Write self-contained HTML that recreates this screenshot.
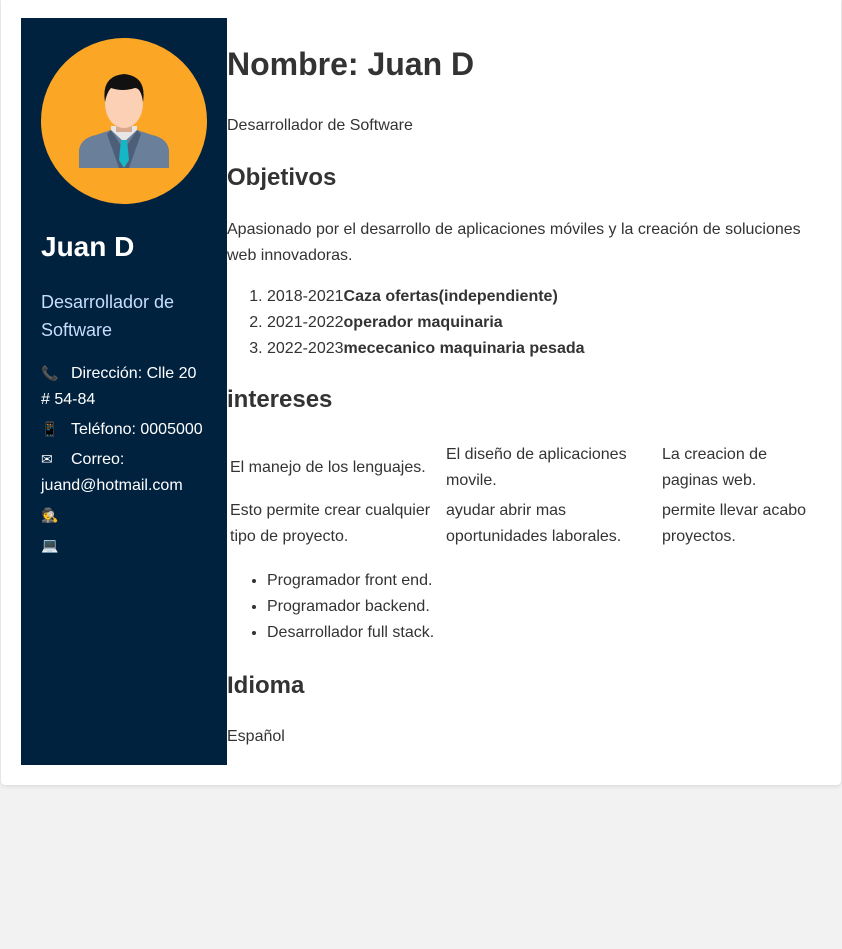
<!DOCTYPE html>
<html><head><meta charset="utf-8"><style>
body{margin:0;background:#f2f2f2;font-family:"Liberation Sans",sans-serif;color:#333;}
.card{position:absolute;left:1px;top:0;width:840px;height:785px;background:#fff;border-radius:0 0 4px 4px;box-shadow:0 1px 4px rgba(0,0,0,.12);}
.side{position:absolute;left:21px;top:18px;width:206px;height:747px;background:#00223f;color:#fff;}
.av{position:absolute;left:20px;top:20px;width:166px;height:166px;border-radius:50%;background:#fca625;overflow:hidden}
.side h2{position:absolute;left:20px;top:213px;margin:0;font-size:28px;}
.role{position:absolute;left:20px;top:270px;width:170px;font-size:18px;line-height:28px;color:#c8dcff;}
.info{position:absolute;left:20px;top:343px;width:168px;font-size:16px;line-height:26px;}
.info p{margin:0 0 4px;height:26px}
.info p.two{height:52px}
.ic{display:inline-block;width:30px;font-size:14px;line-height:20px}
.main{position:absolute;left:227px;top:2px;width:590px;font-size:16px;line-height:26px;}
h1{font-size:32px;margin:0;position:absolute;top:49px;}
h3{font-size:24px;margin:0;position:absolute;}
.abs{position:absolute;margin:0}
ol,ul{margin:0;padding-left:40px}
td{font-size:16px;line-height:26px;vertical-align:middle;padding:1px 3px}
</style></head><body>
<div class="card"></div>
<div class="side">
<div class="av"><svg width="166" height="166" viewBox="0 0 166 166">
<path d="M38 130 L38 112 Q40 100 55 97 L70 92 L96 92 L111 97 Q126 100 128 112 L128 130Z" fill="#6a7f9a"/>
<path d="M70 92 L83 112 L96 92 L100 96 L88 130 L78 130 L66 96Z" fill="#4d5f78"/>
<path d="M70 92 L83 104 L96 92 L96 88 L70 88Z" fill="#e6e6e6"/>
<path d="M80 102 L86 102 L88 122 L83 130 L78 122Z" fill="#15b7c6"/>
<rect x="75" y="78" width="16" height="16" fill="#d9a98f"/>
<ellipse cx="83" cy="66" rx="19" ry="24" fill="#fcd0b4"/>
<path d="M64 64 Q60 38 83 36 Q106 38 102 64 Q100 50 94 50 Q82 54 70 50 Q66 54 64 64Z" fill="#111"/>
</svg></div>
<h2>Juan D</h2>
<div class="role">Desarrollador de Software</div>
<div class="info">
<p class="two"><span class="ic">📞</span>Dirección: Clle 20 # 54-84</p>
<p><span class="ic">📱</span>Teléfono: 0005000</p>
<p class="two"><span class="ic">✉</span>Correo: juand@hotmail.com</p>
<p><span class="ic">🕵</span></p>
<p><span class="ic">💻</span></p>
</div>
</div>
<div class="main">
<h1>Nombre: Juan D</h1>
<p class="abs" style="top:111px">Desarrollador de Software</p>
<h3 style="top:163px">Objetivos</h3>
<p class="abs" style="top:215px;width:590px">Apasionado por el desarrollo de aplicaciones móviles y la creación de soluciones web innovadoras.</p>
<ol class="abs" style="top:282px"><li>2018-2021<b>Caza ofertas(independiente)</b></li><li>2021-2022<b>operador maquinaria</b></li><li>2022-2023<b>mececanico maquinaria pesada</b></li></ol>
<h3 style="top:385px">intereses</h3>
<table class="abs" style="top:437px;width:600px;border-spacing:0 2px;left:0">
<tr><td style="width:210px">El manejo de los lenguajes.</td><td style="width:210px">El diseño de aplicaciones movile.</td><td>La creacion de paginas web.</td></tr>
<tr><td>Esto permite crear cualquier tipo de proyecto.</td><td>ayudar abrir mas oportunidades laborales.</td><td>permite llevar acabo proyectos.</td></tr>
</table>
<ul class="abs" style="top:566px"><li>Programador front end.</li><li>Programador backend.</li><li>Desarrollador full stack.</li></ul>
<h3 style="top:671px">Idioma</h3>
<p class="abs" style="top:722px">Español</p>
</div>
</body></html>
